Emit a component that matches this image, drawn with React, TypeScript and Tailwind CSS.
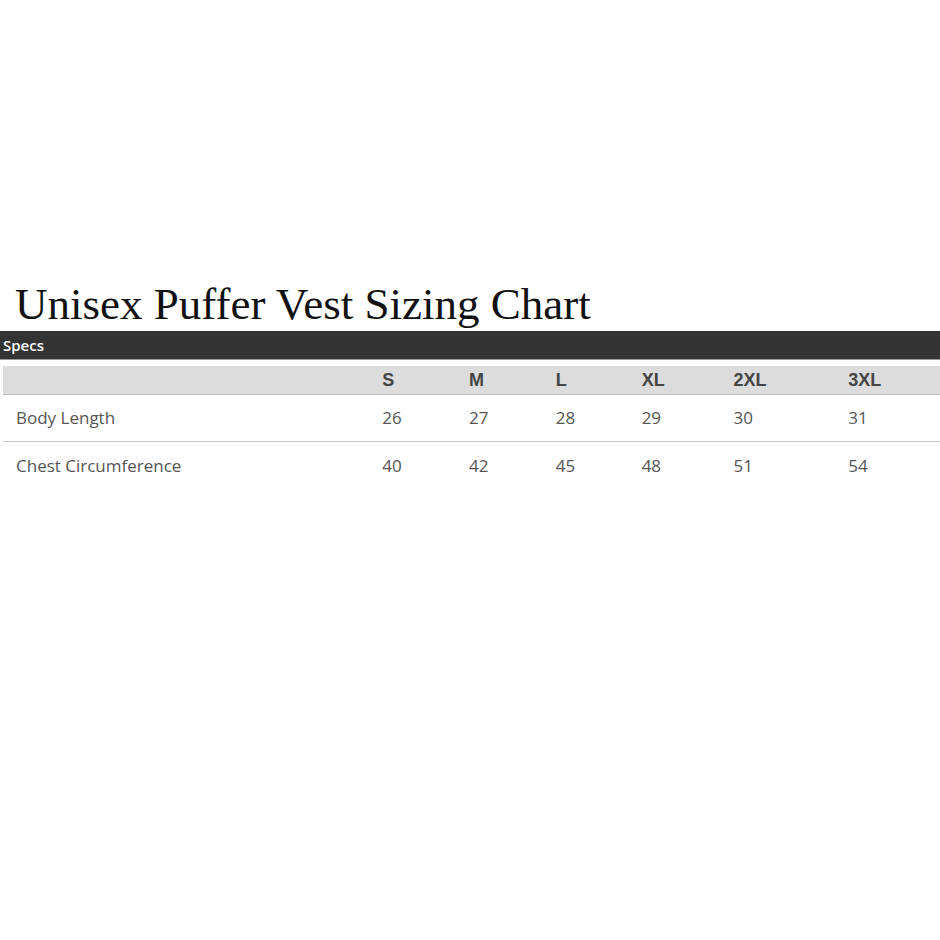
export default function App() {
  const sizes = ["S", "M", "L", "XL", "2XL", "3XL"];
  const cols = ["w-[87px]", "w-[87px]", "w-[86px]", "w-[92px]", "w-[115px]", "w-[92px]"];
  const rows = [
    { label: "Body Length", vals: ["26", "27", "28", "29", "30", "31"] },
    { label: "Chest Circumference", vals: ["40", "42", "45", "48", "51", "54"] },
  ];
  return (
    <div className="w-[940px] h-[940px] bg-white relative">
      <div className="pt-[280px]">
        <h1 className="pl-[15px] h-[51px] text-[45px] leading-[48px] text-[#111] font-['Liberation_Serif',serif]">
          Unisex Puffer Vest Sizing Chart
        </h1>
        <div className="h-[29px] bg-[#333] border-b border-[#999] flex items-center pl-[3px] text-white text-[15px] font-semibold font-['Open_Sans',sans-serif]">
          Specs
        </div>
        <div className="h-[6px]" />
        <div className="ml-[3px] font-['Open_Sans',sans-serif]">
          <div className="h-[29px] pt-[1px] bg-[#dcdcdc] border-b border-[#bbb] flex items-center text-[18px] font-bold text-[#444] font-['Liberation_Sans',sans-serif]">
            <div className="w-[380px]" />
            {sizes.map((s, i) => (
              <div key={s} className={cols[i]}>{s}</div>
            ))}
          </div>
          {rows.map((r, ri) => (
            <div
              key={r.label}
              className={`h-[47px] flex items-center text-[17px] text-[#555] ${ri === 0 ? "border-b border-[#c8c8c8]" : ""}`}
            >
              <div className="w-[380px] pl-[13px]">{r.label}</div>
              {r.vals.map((v, i) => (
                <div key={i} className={cols[i]}>{v}</div>
              ))}
            </div>
          ))}
        </div>
      </div>
    </div>
  );
}
